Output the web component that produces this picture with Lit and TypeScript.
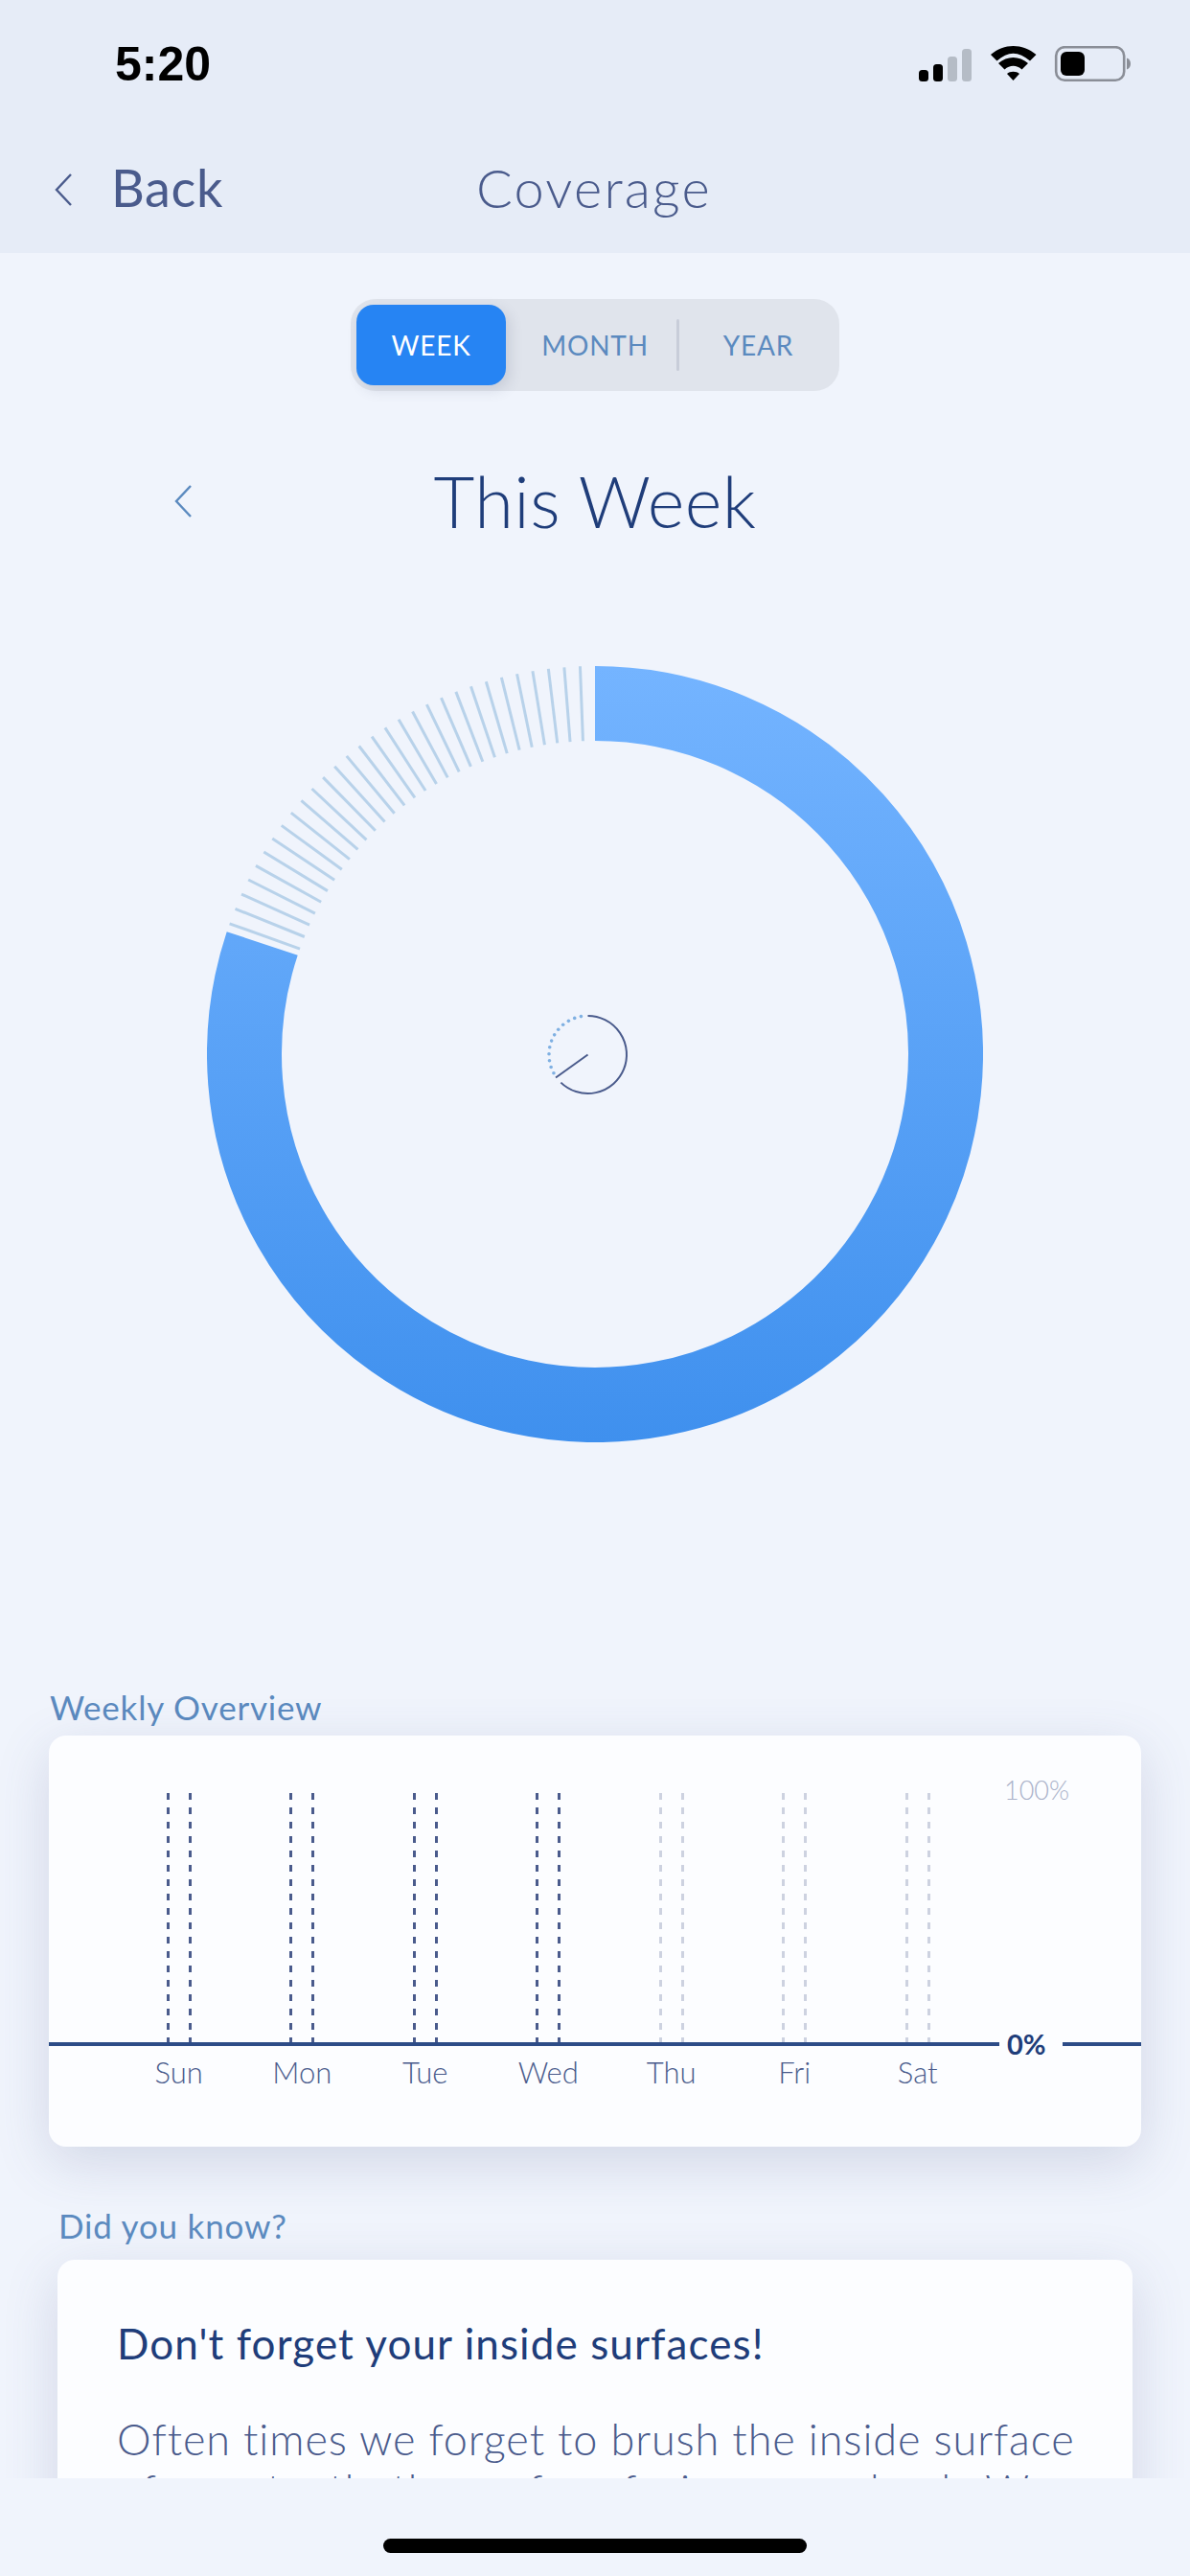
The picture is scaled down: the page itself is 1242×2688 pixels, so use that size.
import { LitElement, html, css, svg } from "lit";
import { customElement } from "lit/decorators.js";

const DAYS = ["Sun", "Mon", "Tue", "Wed", "Thu", "Fri", "Sat"];
const CX = 405, CY = 405;

function polar(r: number, deg: number, cx = CX, cy = CY) {
  const a = (deg * Math.PI) / 180;
  return { x: cx + r * Math.sin(a), y: cy - r * Math.cos(a) };
}
function arc(r: number, from: number, to: number, cx = CX, cy = CY) {
  const s = polar(r, from, cx, cy), e = polar(r, to, cx, cy);
  return `M${s.x} ${s.y}A${r} ${r} 0 ${to - from > 180 ? 1 : 0} 1 ${e.x} ${e.y}`;
}

@customElement("app-root")
export class AppRoot extends LitElement {
  static styles = css`
    :host { display: block; width: 1242px; height: 2688px; overflow: hidden; background: #f0f4fc; font-family: "Lato", "Liberation Sans", sans-serif; font-weight: 300; color: #4a5b8c; }
    .page { display: flex; flex-direction: column; height: 2688px; }
    header { height: 264px; box-sizing: border-box; background: #e6ecf7; padding-top: 49px; flex: none; }
    .status { display: flex; align-items: center; height: 37px; padding-left: 120px; }
    .time { font: 700 50px/37px "Liberation Sans", sans-serif; color: #000; }
    .sicons { margin-left: auto; margin-right: 59px; display: flex; align-items: flex-start; }
    .sicons svg { display: block; }
    .nav { display: grid; grid-template-columns: 1fr auto 1fr; align-items: center; height: 44px; margin-top: 88px; }
    .back { display: flex; align-items: center; padding-left: 57px; gap: 41px; font-size: 54px; font-weight: 400; line-height: 44px; letter-spacing: 0.6px; }
    .back svg { transform: translateY(2px); }
    .nav .title { font-size: 56px; line-height: 44px; letter-spacing: 2.2px; transform: translateX(-1px); }
    main { flex: 1; min-height: 0; overflow: hidden; }
    .seg { display: flex; align-items: center; box-sizing: border-box; width: 510px; height: 96px; margin: 48px 0 0 366px; padding: 0 6px; border-radius: 26px; background: #e0e4ec; font-size: 28px; font-weight: 400; letter-spacing: 0.8px; color: #5b8abf; }
    .seg .active { flex: none; width: 156px; height: 84px; border-radius: 18px; background: #2684f3; color: #fff; display: flex; align-items: center; justify-content: center; box-shadow: 4px 5px 14px rgba(70, 80, 110, 0.16); }
    .seg .month { flex: none; width: 178px; padding-left: 8px; box-sizing: border-box; text-align: center; }
    .seg .div { flex: none; width: 3px; height: 54px; background: #c8cdd9; border-radius: 2px; }
    .seg .year { flex: 1; padding-left: 4px; text-align: center; }
    .week { display: grid; grid-template-columns: 1fr auto 1fr; align-items: center; height: 84px; margin-top: 73px; }
    .week svg { margin-left: 182px; display: block; }
    .week h1 { margin: 0; font-size: 74px; line-height: 84px; font-weight: 300; color: #1f3d7a; letter-spacing: 0.4px; }
    .ring { display: block; margin: 130px auto 0; }
    .label { font-size: 35px; line-height: 40px; color: #5b8abf; font-weight: 400; letter-spacing: 0.8px; }
    .l1 { margin: 256px 0 0 52px; }
    .card { background: #fcfdff; border-radius: 18px; box-shadow: 0 16px 56px rgba(70, 85, 135, 0.18); }
    .chart { position: relative; margin: 10px 51px 0 51px; height: 429px; box-sizing: border-box; padding-top: 60px; }
    .pct { position: absolute; top: 39px; right: 75px; font-size: 27px; line-height: 36px; color: #a9b1c9; }
    .cols { display: grid; grid-template-columns: repeat(7, 128.5px); padding-left: 71.5px; }
    .plot .col { display: flex; justify-content: center; gap: 20px; height: 261px; }
    .dash { width: 3px; background: repeating-linear-gradient(to bottom, #4a5b8c 0 7px, transparent 7px 15px); }
    .future .dash { background: repeating-linear-gradient(to bottom, #cdd2e0 0 7px, transparent 7px 15px); }
    .axis { display: flex; align-items: center; height: 4px; margin-top: -1px; }
    .axis i { display: block; height: 4px; background: #2d4c87; }
    .axis .a { flex: 1; }
    .axis .b { width: 82px; }
    .zero { width: 66px; box-sizing: border-box; padding-left: 8px; font-size: 29px; line-height: 36px; font-weight: 700; color: #1f3d7a; background: #fcfdff; }
    .names { margin-top: 9px; font-size: 31px; line-height: 36px; text-align: center; }
    .l2 { margin: 62px 0 0 61px; }
    .tip { margin: 16px 60px 0 60px; height: 400px; box-sizing: border-box; padding: 61px 40px 0 62px; }
    .tip h2 { margin: 0; font-size: 44px; line-height: 52px; font-weight: 400; color: #1f3d7a; letter-spacing: 1.1px; }
    .tip p { margin: 48px 0 0; font-size: 45px; line-height: 53px; white-space: nowrap; letter-spacing: 0.9px; }
    footer { flex: none; height: 102px; background: #f0f4fc; position: relative; display: flex; justify-content: center; padding-top: 63px; box-sizing: border-box; }
    .home { width: 442px; height: 15px; background: #000; border-radius: 8px; }
  `;

  private ticks() {
    return Array.from({ length: 30 }, (_, i) => {
      const d = -2.2 - i * 2.35;
      const a = polar(405, d), b = polar(327, d);
      return svg`<line x1=${a.x} y1=${a.y} x2=${b.x} y2=${b.y} stroke="#b8d2ea" stroke-width="3"></line>`;
    });
  }

  private clock() {
    const cx = 397.5, cy = 405.5, r = 40.5;
    const dots = Array.from({ length: 12 }, (_, i) => {
      const p = polar(r, 241.5 + i * 9.86, cx, cy);
      return svg`<circle cx=${p.x} cy=${p.y} r="1.8" fill="#7fb0e2"></circle>`;
    });
    return svg`
      <path d=${arc(r, 0, 224, cx, cy)} fill="none" stroke="#4a5b8c" stroke-width="2"></path>
      <line x1=${cx} y1=${cy} x2=${cx - 33.5} y2=${cy + 24} stroke="#4a5b8c" stroke-width="2"></line>
      ${dots}`;
  }

  render() {
    return html`<div class="page">
      <header>
        <div class="status">
          <span class="time">5:20</span>
          <div class="sicons">
            <svg width="224" height="40" viewBox="0 0 224 40">
              <rect x="0" y="25" width="10" height="12" rx="3.5" fill="#000"></rect>
              <rect x="15" y="19" width="10" height="18" rx="3.5" fill="#000"></rect>
              <rect x="30" y="11" width="10" height="26" rx="3.5" fill="#b5bcc6"></rect>
              <rect x="45" y="3" width="10" height="34" rx="3.5" fill="#b5bcc6"></rect>
              <g transform="translate(75 0)" fill="#000">
                <path d="M0 9C14-3 33-3 47.5 9L41 15.5C29 5 18 5 6.5 15.5Z"></path>
                <path d="M8 18C17 10 30 10 39 18L32.5 24.5C27 19.5 20 19.5 14.5 24.5Z"></path>
                <path d="M17 29C20 26 27 26 30 29L23.5 36Z"></path>
              </g>
              <rect x="143.2" y="1.2" width="71" height="34.6" rx="9" fill="none" stroke="#8a8e97" stroke-width="2.6"></rect>
              <rect x="148" y="6" width="25" height="25" rx="6" fill="#000"></rect>
              <path d="M217 12.5C220 13.5 221 16 221 18.500C221 21 220 23.500 217 24.500Z" fill="#8a8e97"></path>
            </svg>
          </div>
        </div>
        <div class="nav">
          <div class="back">
            <svg width="18" height="34" viewBox="0 0 18 34"><path d="M17 1L2 17L17 33" fill="none" stroke="#4a5b8c" stroke-width="2.4"></path></svg>
            <span>Back</span>
          </div>
          <div class="title">Coverage</div>
          <div></div>
        </div>
      </header>
      <main>
        <div class="seg">
          <div class="active">WEEK</div>
          <div class="month">MONTH</div>
          <div class="div"></div>
          <div class="year">YEAR</div>
        </div>
        <div class="week">
          <svg width="18" height="34" viewBox="0 0 18 34"><path d="M17 1L2 17L17 33" fill="none" stroke="#5b8abf" stroke-width="2.4"></path></svg>
          <h1>This Week</h1>
          <div></div>
        </div>
        <svg class="ring" width="810" height="810" viewBox="0 0 810 810">
          <defs>
            <linearGradient id="g" gradientUnits="userSpaceOnUse" x1="0" y1="0" x2="0" y2="810">
              <stop offset="0" stop-color="#74b4ff"></stop>
              <stop offset="1" stop-color="#3f90ee"></stop>
            </linearGradient>
          </defs>
          <path d=${arc(366, 0, 288.4)} fill="none" stroke="url(#g)" stroke-width="78"></path>
          ${this.ticks()}
          ${this.clock()}
        </svg>
        <div class="label l1">Weekly Overview</div>
        <div class="card chart">
          <div class="pct">100%</div>
          <div class="cols plot">
            ${DAYS.map((_, i) => html`<div class="col ${i > 3 ? "future" : ""}"><div class="dash"></div><div class="dash"></div></div>`)}
          </div>
          <div class="axis"><i class="a"></i><div class="zero">0%</div><i class="b"></i></div>
          <div class="cols names">${DAYS.map((d) => html`<div>${d}</div>`)}</div>
        </div>
        <div class="label l2">Did you know?</div>
        <div class="card tip">
          <h2>Don't forget your inside surfaces!</h2>
          <p>Often times we forget to brush the inside surface<br />of your teeth, the surface facing your cheek. We</p>
        </div>
      </main>
      <footer><div class="home"></div></footer>
    </div>`;
  }
}
